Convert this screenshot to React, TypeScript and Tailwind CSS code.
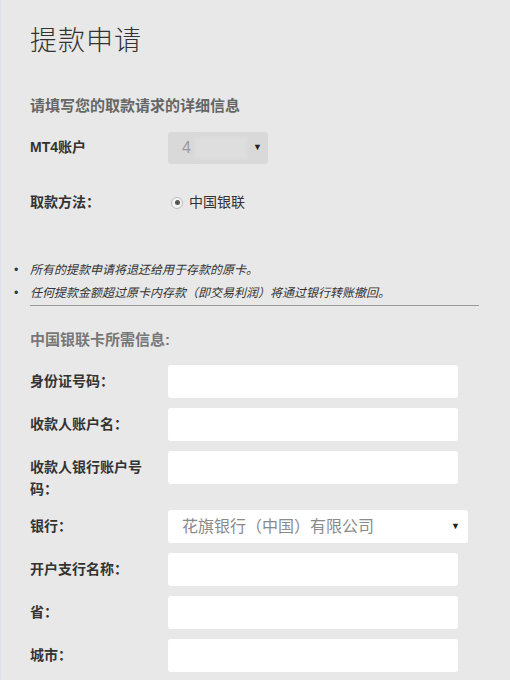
import React from 'react';

const FONT = '"Liberation Sans", "Noto Sans CJK SC", sans-serif';

const fields = [
  { label: '身份证号码：', kind: 'input' },
  { label: '收款人账户名：', kind: 'input' },
  { label: '收款人银行账户号码：', kind: 'input' },
  { label: '银行：', kind: 'select' },
  { label: '开户支行名称：', kind: 'input' },
  { label: '省：', kind: 'input' },
  { label: '城市：', kind: 'input' },
];

function Row({ label, kind }: { label: string; kind: string }) {
  return (
    <div className="flex items-start mb-[10px]">
      <div className="w-[124px] mr-[14px] pt-[5px] text-[14px] leading-[22px] font-bold text-[#333]">
        {label}
      </div>
      {kind === 'select' ? (
        <div className="w-[300px] h-[33px] bg-white rounded-[3px] flex items-center justify-between pl-[14px] pr-[8px]">
          <span className="text-[16px] text-[#8a8a8a]">花旗银行（中国）有限公司</span>
          <span className="text-[9px] text-[#222]">▼</span>
        </div>
      ) : (
        <div className="w-[290px] h-[33px] bg-white rounded-[3px]" />
      )}
    </div>
  );
}

export default function App() {
  return (
    <div
      className="w-[510px] h-[680px] overflow-hidden bg-[#e8e8e8] border-l border-[#dbe4ee]"
      style={{ fontFamily: FONT }}
    >
      <div className="pl-[29px] pt-[24px]">
        <h1 className="text-[27px] leading-[34px] font-light text-[#333] tracking-[1px]">提款申请</h1>
        <div className="mt-[37px] text-[15px] font-bold text-[#666]">请填写您的取款请求的详细信息</div>

        <div className="flex items-center mt-[14px] h-[32px]">
          <div className="w-[138px] text-[14px] font-bold text-[#333]">MT4账户</div>
          <div className="w-[100px] h-[32px] bg-[#d9d9d9] rounded-[3px] flex items-center justify-between pl-[14px] pr-[6px]">
            <span className="flex items-center text-[16px] text-[#999]">
              4<span className="ml-[4px] inline-block w-[52px] h-[22px] bg-[#dedede] blur-[2px]" />
            </span>
            <span className="text-[9px] text-[#222]">▼</span>
          </div>
        </div>

        <div className="flex items-center mt-[24px] h-[30px]">
          <div className="w-[141px] text-[14px] font-bold text-[#333]">取款方法：</div>
          <span className="w-[12px] h-[12px] rounded-full border border-[#bbb] bg-[#f4f4f4] flex items-center justify-center">
            <span className="w-[5px] h-[5px] rounded-full bg-[#555]" />
          </span>
          <span className="ml-[6px] text-[14px] text-[#333]">中国银联</span>
        </div>
      </div>

      <ul className="mt-[41px] pl-[29px] pr-[31px] text-[12px] italic text-[#333]">
        <li className="relative leading-[23px] before:content-['•'] before:absolute before:left-[-16px] before:text-[#333]">
          所有的提款申请将退还给用于存款的原卡。
        </li>
        <li className="relative leading-[23px] border-b border-[#999] before:content-['•'] before:absolute before:left-[-16px] before:text-[#333]">
          任何提款金额超过原卡内存款（即交易利润）将通过银行转账撤回。
        </li>
      </ul>

      <div className="pl-[29px]">
        <div className="mt-[23px] mb-[14px] text-[15px] font-bold text-[#777]">中国银联卡所需信息:</div>
        {fields.map(f => (
          <Row key={f.label} label={f.label} kind={f.kind} />
        ))}
      </div>
    </div>
  );
}
